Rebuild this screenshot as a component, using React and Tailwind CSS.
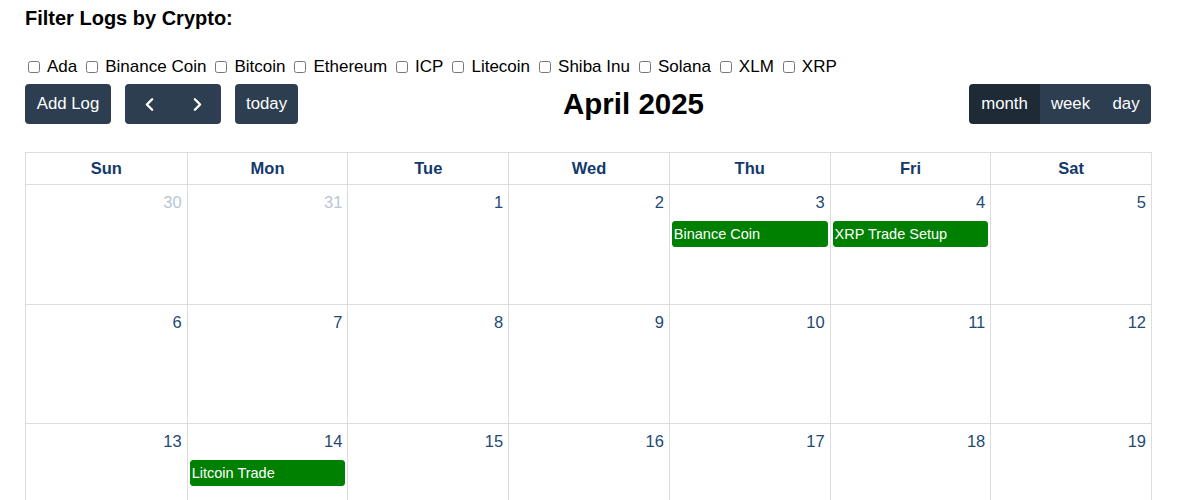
import { ChevronLeft, ChevronRight } from 'lucide-react'

const CRYPTOS = ['Ada', 'Binance Coin', 'Bitcoin', 'Ethereum', 'ICP', 'Litecoin', 'Shiba Inu', 'Solana', 'XLM', 'XRP']
const DAYS = ['Sun', 'Mon', 'Tue', 'Wed', 'Thu', 'Fri', 'Sat']

const EVENTS = {
  '2025-04-03': 'Binance Coin',
  '2025-04-04': 'XRP Trade Setup',
  '2025-04-14': 'Litcoin Trade',
}

function buildWeeks() {
  const weeks = []
  const start = new Date(2025, 2, 30)
  for (let w = 0; w < 5; w++) {
    const row = []
    for (let d = 0; d < 7; d++) {
      const dt = new Date(start)
      dt.setDate(start.getDate() + w * 7 + d)
      const key = `${dt.getFullYear()}-${String(dt.getMonth() + 1).padStart(2, '0')}-${String(dt.getDate()).padStart(2, '0')}`
      row.push({ key, day: dt.getDate(), other: dt.getMonth() !== 3 })
    }
    weeks.push(row)
  }
  return weeks
}

export default function App() {
  const weeks = buildWeeks()

  return (
    <div className="bg-white min-h-screen pl-[25px] font-['Liberation_Sans',Arial,sans-serif] text-black">
      <h3 className="text-[20px] font-bold pt-[7px] leading-[22px]">Filter Logs by Crypto:</h3>

      <div className="flex items-center mt-[26px] h-[24px] text-[17px]">
        {CRYPTOS.map(c => (
          <label key={c} className="flex items-center mr-[6px]">
            <input type="checkbox" className="w-[12px] h-[12px] ml-[3px] mr-[7px]" />
            {c}
          </label>
        ))}
      </div>

      <div className="w-[1127px] flex items-center justify-between mt-[5px] h-[40px]">
        <div className="flex items-center gap-[14px]">
          <button className="bg-[#2c3e50] text-white text-[16.8px] h-[40px] w-[86px] rounded-[4px]">
            Add Log
          </button>
          <div className="flex h-[40px] rounded-[4px] overflow-hidden bg-[#2c3e50]">
            <button className="w-[48px] flex items-center justify-center text-white">
              <ChevronLeft size={21} strokeWidth={2.75} />
            </button>
            <button className="w-[48px] flex items-center justify-center text-white">
              <ChevronRight size={21} strokeWidth={2.75} />
            </button>
          </div>
          <button className="bg-[#2c3e50] text-white text-[16.8px] h-[40px] w-[63px] rounded-[4px]">
            today
          </button>
        </div>
        <h2 className="text-[29.5px] font-bold leading-none">April 2025</h2>
        <div className="flex h-[40px] rounded-[4px] overflow-hidden text-white text-[16.8px] mr-[1px]">
          <button className="bg-[#1e2b37] w-[71px]">month</button>
          <button className="bg-[#2c3e50] w-[61px]">week</button>
          <button className="bg-[#2c3e50] w-[50px]">day</button>
        </div>
      </div>

      <div className="w-[1127px] mt-[28px] border border-[#dddddd]">
        <div className="grid grid-cols-7 h-[32px]">
          {DAYS.map((d, i) => (
            <div
              key={d}
              className={`flex items-center justify-center font-bold text-[16.5px] text-[#133a6a] border-b border-[#dddddd] ${i > 0 ? 'border-l' : ''}`}
            >
              {d}
            </div>
          ))}
        </div>
        {weeks.map((row, wi) => (
          <div key={wi} className="grid grid-cols-7 h-[119px]">
            {row.map((cell, i) => (
              <div
                key={cell.key}
                className={`border-[#dddddd] ${wi > 0 ? 'border-t' : ''} ${i > 0 ? 'border-l' : ''} flex flex-col`}
              >
                <div className={`text-right text-[16.5px] pt-[7px] pr-[5px] leading-[20px] ${cell.other ? 'text-[#b8c6d6]' : 'text-[#234a72]'}`}>
                  {cell.day}
                </div>
                {EVENTS[cell.key] && (
                  <div className="mx-[2px] mt-[9px] h-[26px] bg-[#008000] border border-[#008000] rounded-[3px] text-white text-[14.5px] leading-[24px] px-[1px] truncate">
                    {EVENTS[cell.key]}
                  </div>
                )}
              </div>
            ))}
          </div>
        ))}
      </div>
    </div>
  )
}
